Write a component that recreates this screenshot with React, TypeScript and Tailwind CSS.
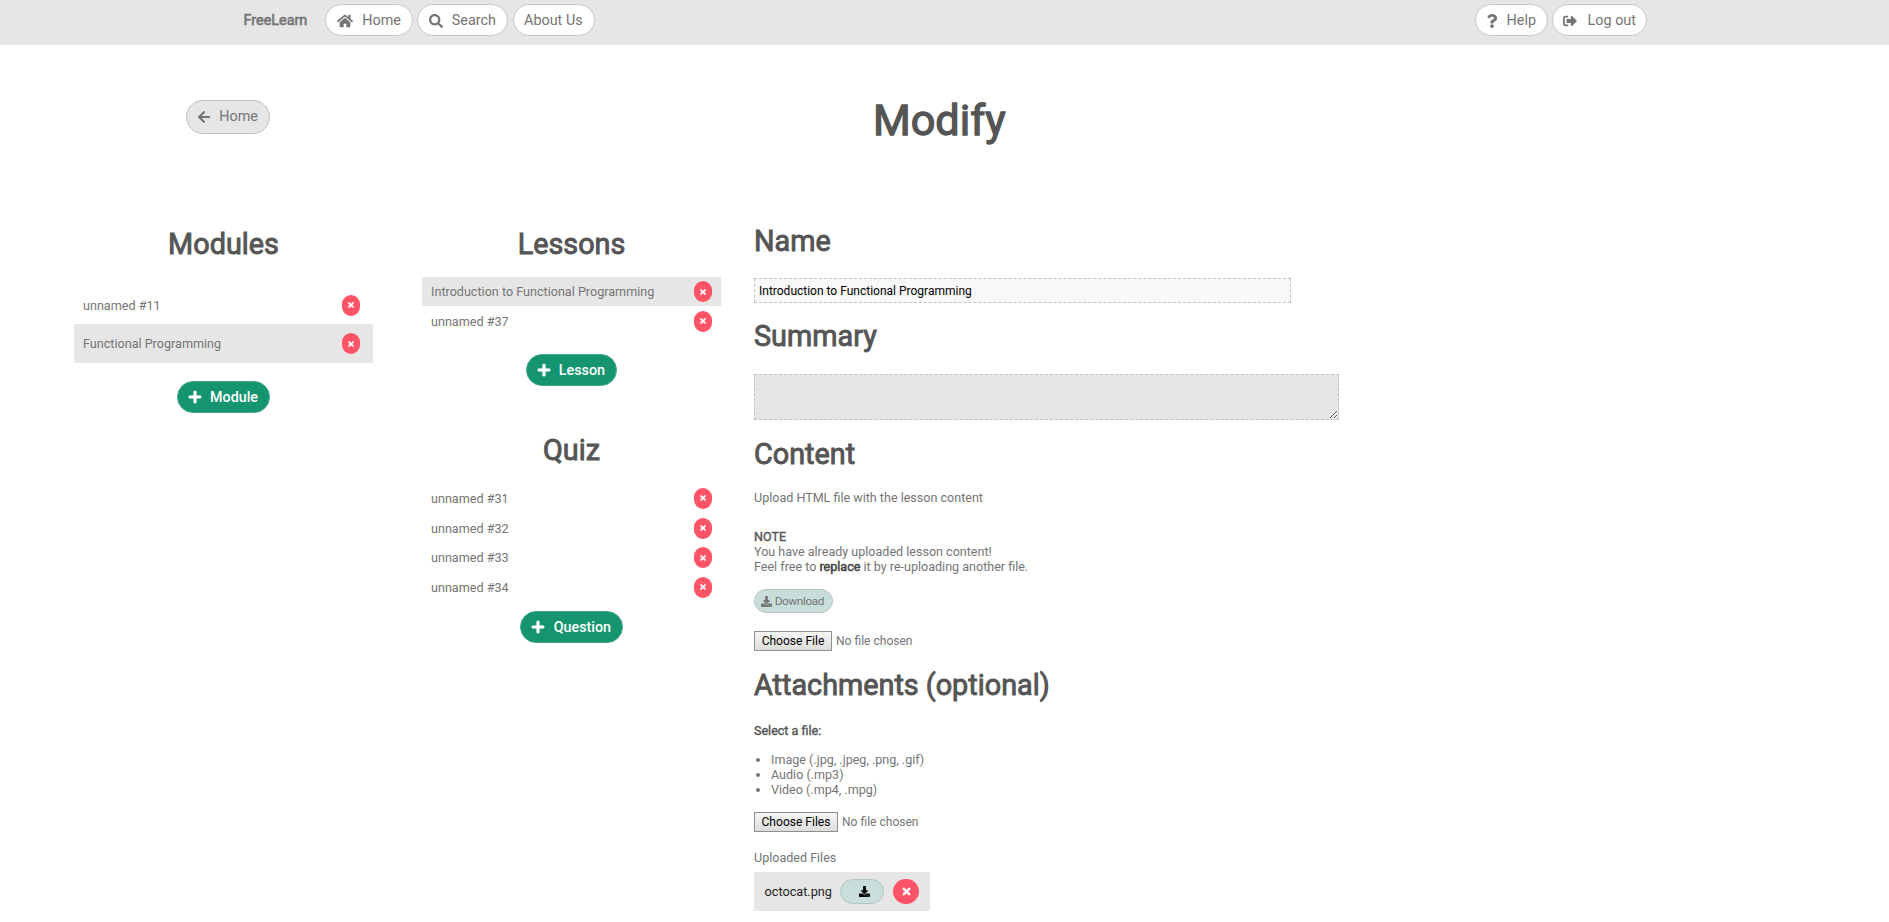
import type { ReactNode } from "react";
import { FaArrowLeft, FaDownload, FaHome, FaPlus, FaQuestion, FaSearch, FaSignOutAlt, FaTimes } from "react-icons/fa";

function Pill({ icon, label, className }: { icon?: ReactNode; label: string; className: string }) {
  return (
    <button className={`flex shrink-0 items-center justify-between rounded-full border whitespace-nowrap ${className}`}>
      {icon}
      <span>{label}</span>
    </button>
  );
}

const navPill = "h-8 border-[#c8c8c8] bg-white pt-[2px] text-[14.4px] text-[#757575]";
const addPill = "h-8 border-[#4aa88a] bg-[#149570] px-[11px] pt-[2px] text-[14.3px] font-medium text-white";

function PlusIcon() {
  return <FaPlus className="-mt-[3px] -ml-px size-3.5 stroke-white [stroke-width:20]" />;
}

function RemoveButton() {
  return (
    <button className="flex h-[21px] w-[18px] items-center justify-center rounded-full bg-[#ff5468] text-white">
      <FaTimes className="size-2 stroke-white [stroke-width:30]" />
    </button>
  );
}

function Row({ label, className, selected }: { label: string; className: string; selected?: boolean }) {
  return (
    <li className={`flex items-center justify-between pl-[9px] text-[12.6px] text-[#757575] ${selected ? "bg-[#e6e6e6]" : ""} ${className}`}>
      <span className="pt-[2px]">{label}</span>
      <RemoveButton />
    </li>
  );
}

function Title({ children, className }: { children: string; className?: string }) {
  return (
    <h2 className={`h-9 text-[28.8px] leading-9 whitespace-nowrap text-[#555555] [-webkit-text-stroke:0.9px_#555555] ${className ?? ""}`}>
      {children}
    </h2>
  );
}

function FileInput({ button, className }: { button: string; className: string }) {
  return (
    <div className="flex items-center gap-1 text-[12.05px] text-[#757575]">
      <button className={`h-5 border border-[#8f8f8f] bg-linear-to-b from-[#f6f6f6] to-[#dddddd] whitespace-nowrap text-black ${className}`}>{button}</button>
      <span>No file chosen</span>
    </div>
  );
}

export default function App() {
  return (
    <div className="h-[922px] w-[1889px] overflow-hidden bg-white font-[Roboto,sans-serif] text-[#757575]">
      <header className="flex h-[45px] items-start bg-[#e6e6e6] pt-1 pl-[243px]">
        <span className="w-[82px] pt-px pl-[0.5px] text-[14.4px] leading-8 [-webkit-text-stroke:0.6px_#757575]">FreeLearn</span>
        <Pill className={`${navPill} w-[88px] pr-[11px] pl-[11px]`} icon={<FaHome className="size-4" />} label="Home" />
        <Pill className={`${navPill} ml-1 w-[91px] pr-[11px] pl-[11px]`} icon={<FaSearch className="size-3.5" />} label="Search" />
        <Pill className={`${navPill} ml-[5px] w-[82px] pl-[10px] pr-[11px]`} label="About Us" />
        <Pill className={`${navPill} ml-[880px] w-[73px] pr-[11px] pl-[11px]`} icon={<FaQuestion className="-ml-[2px] size-3.5" />} label="Help" />
        <Pill className={`${navPill} ml-1 w-[95px] pr-[10px] pl-[10px]`} icon={<FaSignOutAlt className="size-3.5" />} label="Log out" />
      </header>

      <div className="flex h-[177px] items-start pt-[55px] pl-[186px]">
        <Pill className="h-[34px] w-[84px] border-[#c0c0c0] bg-[#e6e6e6] px-[11px] text-[14.4px]" icon={<FaArrowLeft className="-ml-px size-3.5" />} label="Home" />
        <h1 className="-mt-[5px] ml-[603px] text-[43.2px] leading-[52px] text-[#555555] [-webkit-text-stroke:1.3px_#555555]">Modify</h1>
      </div>

      <main className="flex items-start pl-[74px]">
        <section className="flex w-[299px] flex-col items-center pt-[4px]">
          <Title>Modules</Title>
          <ul className="mt-[24px] w-full">
            <Row className="h-[38px] pr-[13px]" label="unnamed #11" />
            <Row className="h-[39px] pr-[13px]" label="Functional Programming" selected />
          </ul>
          <Pill className={`${addPill} mt-[18px] w-[93px]`} icon={<PlusIcon />} label="Module" />
        </section>

        <section className="ml-[49px] flex w-[299px] flex-col items-center pt-[4px]">
          <Title>Lessons</Title>
          <ul className="mt-[15px] w-full">
            <Row className="h-[29px] pr-[9px]" label="Introduction to Functional Programming" selected />
            <Row className="h-[30px] pr-[9px]" label="unnamed #37" />
          </ul>
          <Pill className={`${addPill} mt-[18px] w-[91px]`} icon={<PlusIcon />} label="Lesson" />
          <Title className="mt-[46px]">Quiz</Title>
          <ul className="mt-[15px] w-full">
            <Row className="h-[30px] pr-[9px]" label="unnamed #31" />
            <Row className="h-[30px] pr-[9px]" label="unnamed #32" />
            <Row className="h-[29px] pr-[9px]" label="unnamed #33" />
            <Row className="h-[30px] pr-[9px]" label="unnamed #34" />
          </ul>
          <Pill className={`${addPill} mt-[9px] w-[103px]`} icon={<PlusIcon />} label="Question" />
        </section>

        <section className="ml-[33px] flex flex-col items-start pt-px text-[12.55px] leading-[15px]">
          <Title>Name</Title>
          <input
            className="mt-[19px] h-[25px] w-[537px] border border-dashed border-[#c4c4c4] bg-[#f8f8f8] pl-[4px] text-[12px] text-black"
            defaultValue="Introduction to Functional Programming"
          />
          <Title className="mt-[15px]">Summary</Title>
          <textarea className="mt-[20px] block h-[46px] w-[585px] resize border border-dashed border-[#c4c4c4] bg-[#e6e6e6]" />
          <Title className="mt-[16px]">Content</Title>
          <p className="mt-[18px]">Upload HTML file with the lesson content</p>
          <p className="mt-[24px] text-[#555555] [-webkit-text-stroke:0.4px_#555555]">NOTE</p>
          <p>You have already uploaded lesson content!</p>
          <p>
            Feel free to <span className="text-[#444444] [-webkit-text-stroke:0.5px_#444444]">replace</span> it by re-uploading another file.
          </p>
          <button className="mt-[15px] flex h-[24px] w-[79px] items-center justify-between rounded-full border border-[#b5c7c4] bg-[#c9dedb] pr-[8px] pl-[6px] text-[11.8px] tracking-[-0.4px]">
            <FaDownload className="size-[11px]" />
            <span>Download</span>
          </button>
          <div className="mt-[18px]">
            <FileInput button="Choose File" className="w-[78px]" />
          </div>
          <Title className="mt-[16px]">Attachments (optional)</Title>
          <p className="mt-[20px] text-[#555555] [-webkit-text-stroke:0.4px_#555555]">Select a file:</p>
          <ul className="mt-[14px] list-disc pl-[17px]">
            <li>Image (.jpg, .jpeg, .png, .gif)</li>
            <li>Audio (.mp3)</li>
            <li>Video (.mp4, .mpg)</li>
          </ul>
          <div className="mt-[15px]">
            <FileInput button="Choose Files" className="w-[84px]" />
          </div>
          <p className="mt-[18px]">Uploaded Files</p>
          <div className="mt-[7px] flex h-[39px] w-[176px] items-center bg-[#e6e6e6] pl-[10.5px]">
            <span className="w-[75.5px] text-[12.7px] text-[#222222]">octocat.png</span>
            <button className="flex h-[25px] w-[44px] items-center justify-center rounded-full border border-[#b5c7c4] bg-[#c9dedb] pl-1 text-black">
              <FaDownload className="size-[11px]" />
            </button>
            <button className="ml-[9px] flex h-[25px] w-[26px] items-center justify-center rounded-full bg-[#ff5468] text-white">
              <FaTimes className="size-[11px] stroke-white [stroke-width:30]" />
            </button>
          </div>
        </section>
      </main>
    </div>
  );
}
